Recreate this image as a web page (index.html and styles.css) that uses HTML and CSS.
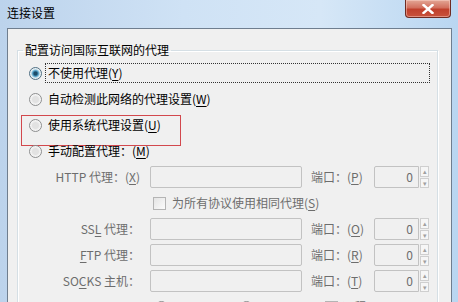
FILE: index.html
```html
<!DOCTYPE html>
<html lang="zh-CN">
<head>
  <meta charset="UTF-8">
  <title>连接设置</title>
  <link rel="stylesheet" href="styles.css">
</head>
<body>
  <div class="window">
    <div class="titlebar">
      <span class="title">连接设置</span>
      <span class="close">
        <svg width="12" height="10" viewBox="0 0 12 10"><path d="M1.5 1 L10.5 9 M10.5 1 L1.5 9" stroke="#fff" stroke-width="2.4" stroke-linecap="square"/></svg>
      </span>
    </div>
    <div class="client">
      <fieldset class="group">
        <legend>配置访问国际互联网的代理</legend>
        <div class="option">
          <span class="radio checked"></span>
          <span class="label focus">不使用代理(<u>Y</u>)</span>
        </div>
        <div class="option">
          <span class="radio"></span>
          <span class="label">自动检测此网络的代理设置(<u>W</u>)</span>
        </div>
        <div class="option marked">
          <span class="radio"></span>
          <span class="label">使用系统代理设置(<u>U</u>)</span>
          <span class="mark"></span>
        </div>
        <div class="option">
          <span class="radio"></span>
          <span class="label">手动配置代理：(<u>M</u>)</span>
        </div>
        <div class="manual">
          <label class="name">HTTP 代理：(<u>X</u>)</label>
          <span class="field"></span>
          <label class="port-name">端口：(<u>P</u>)</label>
          <span class="port"><span class="num">0</span><span class="spin"><i>▴</i><i>▾</i></span></span>

          <div class="same">
            <span class="check"></span>
            <span>为所有协议使用相同代理(<u>S</u>)</span>
          </div>

          <label class="name">SS<u>L</u> 代理：</label>
          <span class="field"></span>
          <label class="port-name">端口：(<u>O</u>)</label>
          <span class="port"><span class="num">0</span><span class="spin"><i>▴</i><i>▾</i></span></span>

          <label class="name"><u>F</u>TP 代理：</label>
          <span class="field"></span>
          <label class="port-name">端口：(<u>R</u>)</label>
          <span class="port"><span class="num">0</span><span class="spin"><i>▴</i><i>▾</i></span></span>

          <label class="name">SO<u>C</u>KS 主机：</label>
          <span class="field"></span>
          <label class="port-name">端口：(<u>T</u>)</label>
          <span class="port"><span class="num">0</span><span class="spin"><i>▴</i><i>▾</i></span></span>

          <div class="socks">
            <span class="radio"></span><span class="opt">SOCKS v4</span>
            <span class="radio"></span><span class="opt">SOCKS v5</span>
            <span class="check"></span><span class="opt">远程 DNS</span>
          </div>
        </div>
      </fieldset>
    </div>
  </div>
</body>
</html>
```

FILE: styles.css
```css
body {
  margin: 0;
  width: 458px;
  height: 302px;
  overflow: hidden;
  font-family: "Noto Sans CJK SC", "Noto Sans", sans-serif;
  font-size: 12px;
  color: #000;
}
u {
  text-decoration: underline;
  text-underline-offset: 2px;
}
.window {
  height: 302px;
  display: flex;
  flex-direction: column;
  background: linear-gradient(to right, #bcd3ec, #cfe2f5 40%, #d6e7f7 70%, #b9d6f1);
}
.titlebar {
  height: 28px;
  flex: none;
  display: flex;
  justify-content: space-between;
  align-items: flex-start;
  padding-left: 7px;
}
.title {
  line-height: 16px;
  padding-top: 5px;
}
.close {
  width: 44px;
  height: 17px;
  margin-right: 7px;
  border: 1px solid #6e2b22;
  border-top: none;
  border-radius: 0 0 4px 4px;
  background: linear-gradient(#e3a796, #d2705e 45%, #c0402c 55%, #c9523c);
  box-shadow: inset 0 0 0 1px rgba(255, 220, 210, 0.45);
  display: flex;
  justify-content: center;
  align-items: center;
}
.client {
  flex: 1;
  margin: 0 6px 0 7px;
  border: 1px solid #6f7e8f;
  border-bottom: none;
  background: #f0f0f0;
  overflow: hidden;
}
.group {
  margin: 13px 13px 0 9px;
  padding: 2px 0 0 0;
  border: 1px solid #d5dfe5;
  box-shadow: inset 1px 1px 0 #fff, 1px 1px 0 #fff;
  min-width: 0;
}
.group legend {
  margin-left: 5px;
  padding: 0 2px;
  line-height: 16px;
}
.option {
  position: relative;
  height: 26px;
  display: flex;
  align-items: center;
  padding-left: 11px;
}
.radio {
  flex: none;
  width: 11px;
  height: 11px;
  border: 1px solid #8d8e8f;
  border-radius: 50%;
  background: radial-gradient(circle, #e2e2e2 0 3px, #eeeeee 4px, #fbfbfb 6px);
}
.radio.checked {
  border-color: #4f6f83;
  background: radial-gradient(circle, #1d4c68 0 1.5px, #3d86ad 2.5px, #7fc0de 3.5px, #dfe9ee 4.5px, #fafafa 6px);
}
.label {
  margin-left: 3px;
  padding: 1px 2px;
  border: 1px dotted transparent;
  line-height: 16px;
}
.label.focus {
  flex: 1;
  margin-right: 7px;
  border-color: #333;
}
.mark {
  position: absolute;
  left: 3px;
  top: 3px;
  width: 158px;
  height: 29px;
  border: 1px solid #d2484d;
}
.manual {
  display: grid;
  grid-template-columns: 132px 152px 72px 60px;
  grid-auto-rows: 26px;
  align-items: center;
  color: #6d6d6d;
  line-height: 16px;
}
.name {
  text-align: right;
  padding-right: 10px;
}
.field {
  height: 20px;
  border: 1px solid #c2c2c2;
  border-radius: 2px;
}
.port-name {
  padding-left: 9px;
}
.port {
  display: flex;
  height: 22px;
}
.num {
  width: 38px;
  border: 1px solid #c2c2c2;
  border-radius: 2px 0 0 2px;
  padding-right: 5px;
  text-align: right;
  line-height: 20px;
}
.spin {
  width: 9px;
  display: flex;
  flex-direction: column;
  gap: 1px;
  margin-left: 1px;
}
.spin i {
  flex: 1;
  border: 1px solid #cfcfcf;
  font-style: normal;
  font-size: 7px;
  line-height: 8px;
  text-align: center;
  color: #a0a0a0;
  background: #f6f6f6;
}
.same {
  grid-column: 2 / 5;
  display: flex;
  align-items: center;
  gap: 6px;
  padding-left: 3px;
  height: 24px;
}
.manual .same {
  margin: -1px 0;
}
.check {
  flex: none;
  width: 11px;
  height: 11px;
  border: 1px solid #b4b4b4;
  background: linear-gradient(135deg, #e4e4e4, #fbfbfb);
}
.socks {
  grid-column: 2 / 5;
  display: flex;
  align-items: center;
  padding-left: 5px;
}
.socks .opt {
  margin: 0 14px 0 4px;
}
```
